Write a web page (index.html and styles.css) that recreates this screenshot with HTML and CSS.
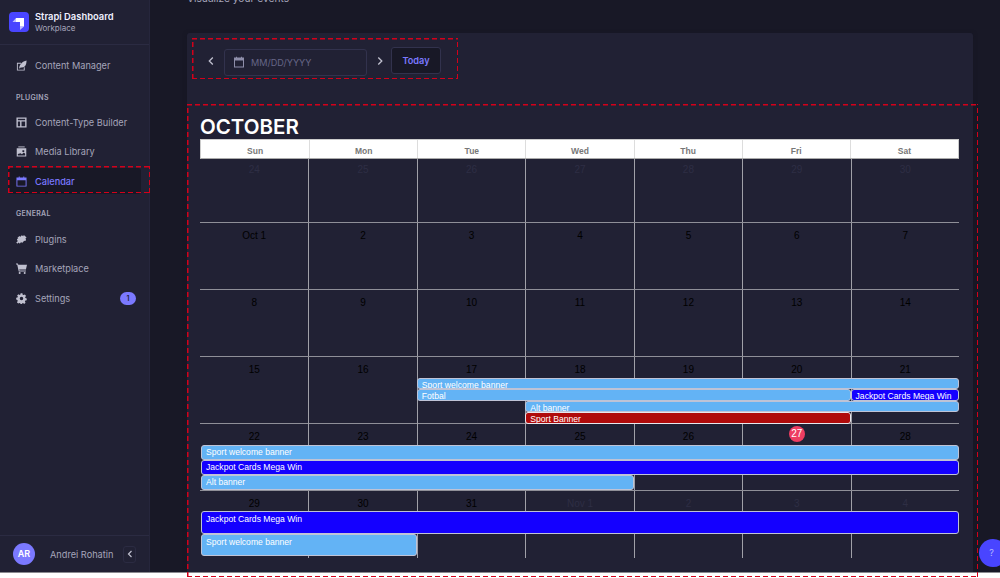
FILE: index.html
```html
<!DOCTYPE html>
<html lang="en">
<head>
<meta charset="UTF-8">
<meta name="viewport" content="width=device-width, initial-scale=1.0">
<title>Calendar - Strapi Dashboard</title>
<link rel="stylesheet" href="styles.css">
</head>
<body>
<div class="app">
    <aside class="sidebar">
        <div class="brand">
            <div class="brand-logo">
                <svg viewBox="0 0 20 20" width="20" height="20"><path d="M7 6h8v8.500h-4V10H7z" fill="#fff"/><path d="M7 6v4H3.500z" fill="#fff" opacity=".65"/><path d="M11 14.500h4L11 18z" fill="#fff" opacity=".65"/></svg>
            </div>
            <div>
                <div class="brand-name">Strapi Dashboard</div>
                <div class="brand-sub">Workplace</div>
            </div>
        </div>
        <nav class="nav">
            <a class="nav-item">
                <svg class="nav-icon" viewBox="0 0 12 12"><path d="M1 3h4.500v1H2v6.500h6.500V8h1v3.500H1z" fill="#c0c0cf"/><path d="M3.500 8.500C4 4.500 7 1.500 11.500.5 11.500 5 10 8 6.500 8.200H5L4 9.500z" fill="#c0c0cf"/></svg>
                Content Manager
            </a>
            <div class="nav-label first">PLUGINS</div>
            <a class="nav-item">
                <svg class="nav-icon" viewBox="0 0 12 12"><path fill-rule="evenodd" d="M.5.5h11v11H.5zM2 3.500h8V2H2zM2 5v5h2.500V5zm4 0v5h4V5z" fill="#c0c0cf"/></svg>
                Content-Type Builder
            </a>
            <a class="nav-item">
                <svg class="nav-icon" viewBox="0 0 12 12"><path d="M2.500.5h7v1h-7z" fill="#c0c0cf"/><path fill-rule="evenodd" d="M.8 2.500h10.400v9H.8zM2 8.800v1.500h8V8.500L8.500 7 6.500 9 5 8zM7 4.500h2v2H7z" fill="#c0c0cf"/></svg>
                Media Library
            </a>
            <a class="nav-item active">
                <svg class="nav-icon" viewBox="0 0 12 12"><path fill-rule="evenodd" d="M.5 1.500H3V.5h1v1h4V.5h1v1h2.500v10H.5zM1.500 4.500v6h9v-6z" fill="#7b79ff"/></svg>
                Calendar
            </a>
            <div class="nav-label">GENERAL</div>
            <a class="nav-item">
                <svg class="nav-icon" viewBox="0 0 12 12"><path d="M3.800 2.300 4.900 3.400C4.800 1.700 7 .8 7.800 2.400L8.600 1.200 11.500 3.800 10.200 5.200C11.600 6 10.800 8 9 7.400L6.600 9.800 5.300 8.500C5.400 10.300 3.300 10.900 2.600 9.400L1.500 10.600.3 9.300 2.100 7.500C.5 7 .8 4.800 2.600 5L1.600 4z" fill="#c0c0cf"/></svg>
                Plugins
            </a>
            <a class="nav-item">
                <svg class="nav-icon" viewBox="0 0 12 12"><path d="M0 .5h2L2.500 2H12l-1.200 5h-7.300l.3 1.200h7v1H3L1.300 1.500H0z" fill="#c0c0cf"/><circle cx="4" cy="10.800" r="1.100" fill="#c0c0cf"/><circle cx="9.500" cy="10.800" r="1.100" fill="#c0c0cf"/></svg>
                Marketplace
            </a>
            <a class="nav-item">
                <svg class="nav-icon" viewBox="0 0 12 12"><path fill-rule="evenodd" d="M5 .3h2l.3 1.500 1 .5L9.700 1.700 11 3.300l-1 1.100.2 1.100 1.500.5v2l-1.500.3-.5 1 .7 1.400-1.500 1.300-1.200-1-1.100.4-.4 1.300H5l-.3-1.500-1-.4-1.300.7L1 10l.9-1.200-.4-1.100L.2 7.200v-2l1.400-.3.400-1L1.200 2.600 2.700 1.300l1.200.8.900-.4zM6 4.200a1.900 1.900 0 1 0 0 3.800 1.900 1.900 0 0 0 0-3.800z" fill="#c0c0cf"/></svg>
                Settings
                <span class="badge">1</span>
            </a>
        </nav>
        <div class="user">
            <div class="avatar">AR</div>
            <div class="user-name">Andrei Rohatin</div>
            <button class="collapse">
                <svg viewBox="0 0 8 8" width="8" height="8"><path d="M5.500 1 2.500 4l3 3" fill="none" stroke="#c0c0cf" stroke-width="1.200"/></svg>
            </button>
        </div>
    </aside>
    <main class="main">
        <p class="subtitle">Visualize your events</p>
        <section class="card">
            <div class="toolbar">
                <svg class="chevron" viewBox="0 0 10 10"><path d="M6.800 1.500 3.300 5l3.500 3.500" fill="none" stroke="#c0c0cf" stroke-width="1.300"/></svg>
                <div class="date-input">
                    <svg viewBox="0 0 12 12" width="12" height="12"><path fill-rule="evenodd" d="M1 1.500h2V.7h1v.8h4V.7h1v.8h2v10H1zM2 4.500v6h8v-6z" fill="#8e8ea9"/></svg>
                    <span>MM/DD/YYYY</span>
                </div>
                <svg class="chevron" viewBox="0 0 10 10"><path d="M3.300 1.500 6.800 5 3.300 8.500" fill="none" stroke="#c0c0cf" stroke-width="1.300"/></svg>
                <button class="today">Today</button>
            </div>
            <h2 class="month">OCTOBER</h2>
            <div class="calendar">
                <div class="weekdays">
                    <div>Sun</div><div>Mon</div><div>Tue</div><div>Wed</div><div>Thu</div><div>Fri</div><div>Sat</div>
                </div>
                <div class="week first-week">
                    <div class="day other">24</div><div class="day other">25</div><div class="day other">26</div><div class="day other">27</div><div class="day other">28</div><div class="day other">29</div><div class="day other">30</div>
                </div>
                <div class="week">
                    <div class="day">Oct 1</div><div class="day">2</div><div class="day">3</div><div class="day">4</div><div class="day">5</div><div class="day">6</div><div class="day">7</div>
                </div>
                <div class="week">
                    <div class="day">8</div><div class="day">9</div><div class="day">10</div><div class="day">11</div><div class="day">12</div><div class="day">13</div><div class="day">14</div>
                </div>
                <div class="week slim-events">
                    <div class="day">15</div><div class="day">16</div><div class="day">17</div><div class="day">18</div><div class="day">19</div><div class="day">20</div><div class="day">21</div>
                    <div class="event sky row-2 from-3 to-8">Sport welcome banner</div>
                    <div class="event sky row-3 from-3 to-7">Fotbal</div>
                    <div class="event blue row-3 from-7 to-8">Jackpot Cards Mega Win</div>
                    <div class="event sky row-4 from-4 to-8">Alt banner</div>
                    <div class="event red row-5 from-4 to-7">Sport Banner</div>
                </div>
                <div class="week mid-events">
                    <div class="day">22</div><div class="day">23</div><div class="day">24</div><div class="day">25</div><div class="day">26</div><div class="day"><span class="today-mark">27</span></div><div class="day">28</div>
                    <div class="event sky row-2 from-1 to-8">Sport welcome banner</div>
                    <div class="event blue row-3 from-1 to-8">Jackpot Cards Mega Win</div>
                    <div class="event sky row-4 from-1 to-5">Alt banner</div>
                </div>
                <div class="week big-events">
                    <div class="day">29</div><div class="day">30</div><div class="day">31</div><div class="day other">Nov 1</div><div class="day other">2</div><div class="day other">3</div><div class="day other">4</div>
                    <div class="event blue row-2 from-1 to-8">Jackpot Cards Mega Win</div>
                    <div class="event sky row-3 from-1 to-3">Sport welcome banner</div>
                </div>
            </div>
        </section>
    </main>
</div>
<div class="help">?</div>
<div class="mark mark-nav"></div>
<div class="mark mark-toolbar"></div>
<div class="mark mark-calendar"></div>
</body>
</html>
```

FILE: styles.css
```css
* {
    box-sizing: border-box;
}
html, body {
    height: 578px;
}
body {
    margin: 0;
    position: relative;
    overflow: hidden;
    background-color: #fff;
    font-family: Inter, 'Noto Sans', sans-serif;
}
.app {
    display: flex;
    height: 572px;
    background-color: #181826;
    box-shadow: 0 1px 0 #8a8a90;
}

/* sidebar */
.sidebar {
    display: flex;
    flex-direction: column;
    width: 150px;
    flex-shrink: 0;
    background-color: #212134;
    border-right: 1px solid #26263c;
}
.brand {
    display: flex;
    align-items: center;
    gap: 6px;
    height: 45px;
    padding-left: 9px;
    border-bottom: 1px solid #2b2b42;
}
.brand-logo {
    width: 20px;
    height: 20px;
    border-radius: 4px;
    background-color: #4945ff;
}
.brand-logo svg {
    display: block;
}
.brand-name {
    font-size: 9.400px;
    font-weight: 600;
    line-height: 13px;
    color: #f0f0ff;
}
.brand-sub {
    font-size: 8px;
    line-height: 11px;
    color: #a5a5ba;
}
.nav {
    flex: 1;
    padding: 7px 8px 0;
}
.nav-item {
    display: flex;
    align-items: center;
    gap: 8px;
    height: 26px;
    margin-bottom: 3.400px;
    padding-left: 8px;
    border-radius: 3px;
    font-size: 9.200px;
    color: #a5a5ba;
}
.nav-item.active {
    background-color: #181826;
    color: #7b79ff;
    font-weight: 500;
}
.nav-icon {
    width: 11px;
    height: 11px;
    flex-shrink: 0;
}
.nav-label {
    height: 12px;
    margin: 14px 0 6px 8px;
    font-size: 7px;
    font-weight: 600;
    line-height: 12px;
    letter-spacing: .3px;
    color: #a5a5ba;
}
.nav-label.first {
    margin-top: 14px;
    margin-bottom: 5.500px;
}
.badge {
    width: 16px;
    height: 13px;
    margin-left: auto;
    margin-right: 5px;
    border-radius: 7px;
    background-color: #7b79ff;
    font-size: 7px;
    font-weight: 600;
    line-height: 13px;
    text-align: center;
    color: #212134;
}
.user {
    display: flex;
    align-items: center;
    height: 37px;
    padding: 0 13px;
    border-top: 1px solid #2b2b42;
}
.avatar {
    width: 22px;
    height: 22px;
    flex-shrink: 0;
    border-radius: 50%;
    background-color: #7b79ff;
    font-size: 9px;
    font-weight: 600;
    line-height: 22px;
    text-align: center;
    color: #fff;
}
.user-name {
    margin-left: 15px;
    font-size: 9.200px;
    color: #a5a5ba;
}
.collapse {
    display: flex;
    align-items: center;
    justify-content: center;
    width: 13px;
    height: 17px;
    margin-left: auto;
    padding: 0;
    background: none;
    border: 1px solid #2b2b42;
    border-radius: 3px;
}

/* main area */
.main {
    flex: 1;
    padding-left: 37px;
    overflow: hidden;
}
.subtitle {
    height: 16px;
    margin: -10px 0 27px 0;
    font-size: 10.200px;
    line-height: 16px;
    color: #a5a5ba;
}
.card {
    width: 786px;
    height: 545px;
    padding: 14px 14px 0 13px;
    background-color: #212134;
    border-radius: 3px;
    box-shadow: 0 1px 4px rgba(20,20,32,.5);
}
.toolbar {
    display: flex;
    align-items: center;
    height: 28px;
}
.chevron {
    width: 10px;
    height: 10px;
    flex-shrink: 0;
    margin-left: 6px;
}
.date-input {
    display: flex;
    align-items: center;
    gap: 6px;
    width: 143px;
    height: 27px;
    margin: 2px 0 0 8px;
    padding-left: 8px;
    border: 1px solid #32324d;
    border-radius: 3px;
    font-size: 9.100px;
    color: #666687;
}
.date-input + .chevron {
    margin-left: 8px;
}
.today {
    width: 50px;
    height: 27px;
    margin: -1px 0 0 6px;
    padding: 0;
    background-color: #181826;
    border: 1px solid #32324d;
    border-radius: 3px;
    font-family: inherit;
    font-size: 9.200px;
    font-weight: 600;
    color: #7b79ff;
}
.month {
    height: 28px;
    margin: 36px 0 0;
    padding-top: 4px;
    font-size: 20.500px;
    font-weight: 600;
    line-height: 24px;
    color: #fff;
}

/* calendar */
.calendar {
    width: 759px;
    font-family: 'Liberation Sans', Arial, sans-serif;
}
.weekdays {
    display: grid;
    grid-template-columns: repeat(7, 1fr);
    height: 20px;
    background-color: #fff;
    border: 1px solid #ccc;
    border-bottom-color: #aaa;
}
.weekdays div {
    padding-top: 6px;
    border-left: 1px solid #ddd;
    font-size: 8.500px;
    font-weight: bold;
    text-align: center;
    color: #777;
}
.weekdays div:first-child {
    border-left: 0;
}
.week {
    display: grid;
    grid-template-columns: repeat(7, 1fr);
    grid-template-rows: 20px 1fr;
    height: 67px;
    border-bottom: 1px solid #8f8f98;
}
.first-week {
    height: 64px;
}
.day {
    grid-row: 1 / 7;
    padding-top: 6.500px;
    border-left: 1px solid #a0a0a8;
    font-size: 10px;
    line-height: 12px;
    text-align: center;
    color: #000;
}
.first-week .day {
    padding-top: 5px;
}
.day:first-child {
    border-left: 0;
}
.day:nth-child(1) { grid-column: 1; }
.day:nth-child(2) { grid-column: 2; }
.day:nth-child(3) { grid-column: 3; }
.day:nth-child(4) { grid-column: 4; }
.day:nth-child(5) { grid-column: 5; }
.day:nth-child(6) { grid-column: 6; }
.day:nth-child(7) { grid-column: 7; }
.day.other {
    color: #2e2e44;
}
.today-mark {
    display: block;
    width: 16px;
    height: 16px;
    margin: -4.500px auto 0;
    border-radius: 50%;
    background-color: #ee3d62;
    line-height: 16px;
    color: #fff;
}
.slim-events {
    grid-template-rows: 20.500px 11.500px 11.500px 11.500px 11.500px;
}
.mid-events {
    grid-template-rows: 20.500px 15px 15px 15px;
}
.big-events {
    grid-template-rows: 20px 22.500px 22.500px;
    border-bottom: 0;
}
.event {
    z-index: 1;
    min-width: 0;
    overflow: hidden;
    padding-left: 4px;
    border: 1px solid #bfc3d6;
    border-radius: 3px;
    font-size: 8.600px;
    line-height: 12px;
    white-space: nowrap;
    color: #fff;
}
.big-events .event {
    padding-top: 1px;
}
.sky {
    background-color: #63b3f5;
}
.blue {
    background-color: #1400ff;
}
.red {
    background-color: #b00b0b;
    border-color: #e8e8ee;
}
.row-2 { grid-row: 2; }
.row-3 { grid-row: 3; }
.row-4 { grid-row: 4; }
.row-5 { grid-row: 5; }
.from-1 { grid-column-start: 1; margin-left: 1px; }
.from-3 { grid-column-start: 3; }
.from-4 { grid-column-start: 4; }
.from-7 { grid-column-start: 7; }
.to-3 { grid-column-end: 3; }
.to-5 { grid-column-end: 5; }
.to-7 { grid-column-end: 7; }
.to-8 { grid-column-end: 8; }

/* things on top of the page */
.help {
    position: absolute;
    left: 979px;
    top: 539px;
    width: 28px;
    height: 28px;
    padding-right: 3px;
    border-radius: 50%;
    background-color: #4945ff;
    font-size: 9px;
    line-height: 28px;
    text-align: center;
    color: #b4b6ff;
}
.mark {
    position: absolute;
    --dash: #d4001a;
    background:
        repeating-linear-gradient(90deg, var(--dash) 0 5px, transparent 5px 8px) top left / 100% 1.500px no-repeat,
        repeating-linear-gradient(90deg, var(--dash) 0 5px, transparent 5px 8px) bottom left / 100% 1.500px no-repeat,
        repeating-linear-gradient(0deg, var(--dash) 0 5px, transparent 5px 8px) top left / 1.500px 100% no-repeat,
        repeating-linear-gradient(0deg, var(--dash) 0 5px, transparent 5px 8px) top right / 1.500px 100% no-repeat;
}
.mark-nav {
    left: 8px;
    top: 166px;
    width: 142px;
    height: 27px;
}
.mark-toolbar {
    left: 192px;
    top: 38px;
    width: 266px;
    height: 41px;
}
.mark-calendar {
    left: 187px;
    top: 104px;
    width: 791px;
    height: 473px;
}
```
